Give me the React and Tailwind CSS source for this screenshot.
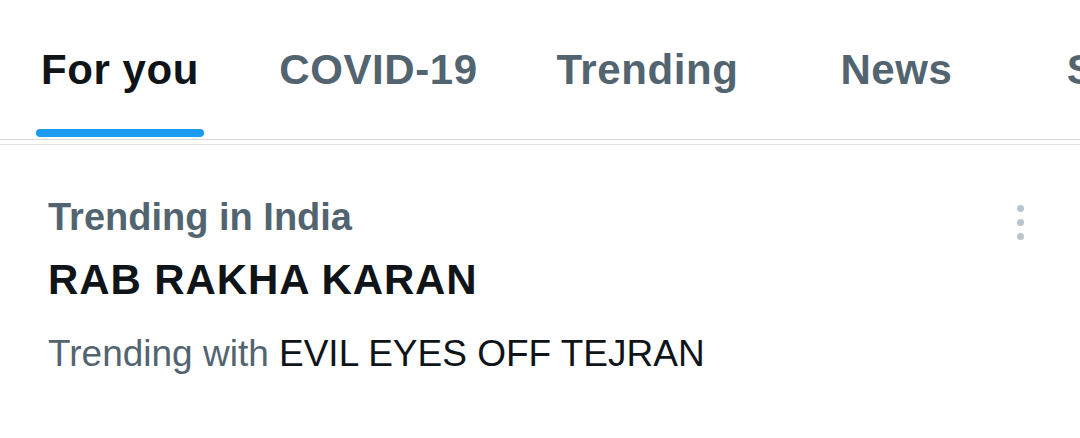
export default function App() {
    const tabs = [
        { label: "For you", w: "w-[240px]", active: true },
        { label: "COVID-19", w: "w-[277px]" },
        { label: "Trending", w: "w-[261px]" },
        { label: "News", w: "w-[237px]" },
        { label: "Sports", w: "w-[240px]" },
    ];

    return (
        <div className="w-[1080px] h-[438px] overflow-hidden bg-white font-['Liberation_Sans',Arial,sans-serif]">
            <div className="flex h-[139px] overflow-hidden font-bold text-[42px] tracking-[0.6px]">
                {tabs.map((t) => (
                    <div key={t.label} className={`${t.w} shrink-0 flex flex-col items-center`}>
                        <div className={`pt-[42px] leading-[56px] whitespace-nowrap ${t.active ? "text-[#0f1419]" : "text-[#536471]"}`}>
                            {t.label}
                        </div>
                        {t.active && <div className="mt-[31px] h-[8px] w-[168px] rounded-full bg-[#1d9bf0]" />}
                    </div>
                ))}
            </div>
            <div className="h-px bg-[#d5d9dc]" />
            <div className="h-[4px]" />
            <div className="h-px bg-[#dfe3e6]" />

            <div className="flex pl-[48px] pr-[56px] pt-[50px]">
                <div className="flex-1">
                    <div className="text-[38px] leading-[44px] font-bold text-[#536471]">Trending in India</div>
                    <div className="mt-[17px] text-[42px] leading-[48px] font-bold tracking-[0.9px] text-[#0f1419]">RAB RAKHA KARAN</div>
                    <div className="mt-[28px] text-[37px] leading-[44px] text-[#536471]">
                        Trending with <span className="text-[#0f1419]">EVIL EYES OFF TEJRAN</span>
                    </div>
                </div>
                <div className="flex flex-col items-center gap-[7px] pt-[10px]">
                    <span className="block h-[7px] w-[7px] rounded-full bg-[#b9c4cc]" />
                    <span className="block h-[7px] w-[7px] rounded-full bg-[#b9c4cc]" />
                    <span className="block h-[7px] w-[7px] rounded-full bg-[#b9c4cc]" />
                </div>
            </div>
        </div>
    );
}
